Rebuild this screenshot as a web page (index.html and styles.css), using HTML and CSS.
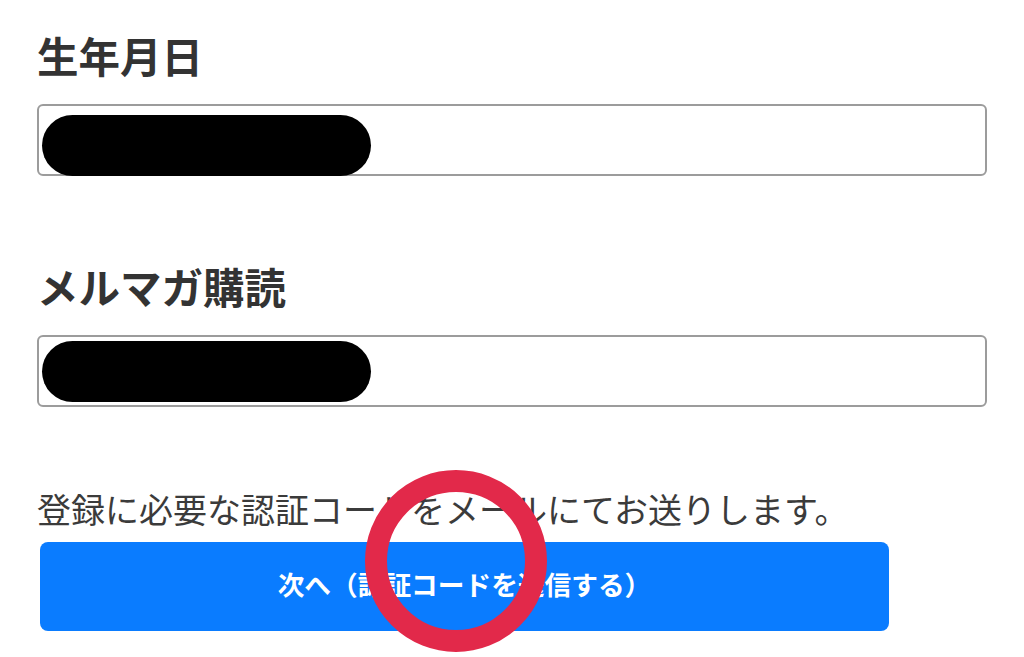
FILE: index.html
```html
<!DOCTYPE html>
<html lang="ja">
<head>
<meta charset="utf-8">
<link rel="stylesheet" href="styles.css">
</head>
<body>
<main class="form">
  <section class="field">
    <label class="label">生年月日</label>
    <div class="input"><span class="blob blob-low"></span></div>
  </section>
  <section class="field">
    <label class="label">メルマガ購読</label>
    <div class="input"><span class="blob"></span></div>
  </section>
  <p class="note">登録に必要な認証コードをメールにてお送りします。</p>
  <button class="submit">次へ（認証コードを送信する）</button>
</main>
<div class="mark"></div>
</body>
</html>
```
FILE: styles.css
```css
html, body {
  margin: 0;
  padding: 0;
  background: #ffffff;
  height: 657px;
  overflow: hidden;
}
body {
  font-family: "Noto Sans CJK JP", "Noto Sans", sans-serif;
  position: relative;
}
.form {
  display: flex;
  flex-direction: column;
  padding: 35px 37px 0 37px;
  width: 950px;
}
.field {
  display: flex;
  flex-direction: column;
  gap: 28px;
  margin-bottom: 90px;
}
.field + .field {
  margin-bottom: 85px;
}
.label {
  font-size: 41.5px;
  line-height: 41px;
  font-weight: 700;
  color: #333333;
  margin-left: 0;
}
.input {
  box-sizing: border-box;
  height: 72px;
  border: 2px solid #9c9c9c;
  border-radius: 6px;
  display: flex;
  align-items: center;
  padding: 0 3px;
}
.blob {
  display: block;
  width: 329px;
  height: 61px;
  border-radius: 31px;
  background: #000000;
}
.blob-low {
  margin-top: 10px;
}
.note {
  margin: 0 0 16px 0;
  font-size: 34px;
  line-height: 34px;
  color: #3b3b3b;
  font-weight: 400;
}
.submit {
  margin-left: 3px;
  width: 849px;
  height: 89px;
  border: none;
  border-radius: 8px;
  background: #0a7cff;
  color: #ffffff;
  font-family: "Noto Sans CJK JP", "Noto Sans", sans-serif;
  font-size: 26.7px;
  font-weight: 700;
  padding: 0 0 6px 0;
}
.mark {
  position: absolute;
  left: 365px;
  top: 470px;
  width: 182px;
  height: 182px;
  box-sizing: border-box;
  border: 22px solid #e2294a;
  border-radius: 50%;
}
```
